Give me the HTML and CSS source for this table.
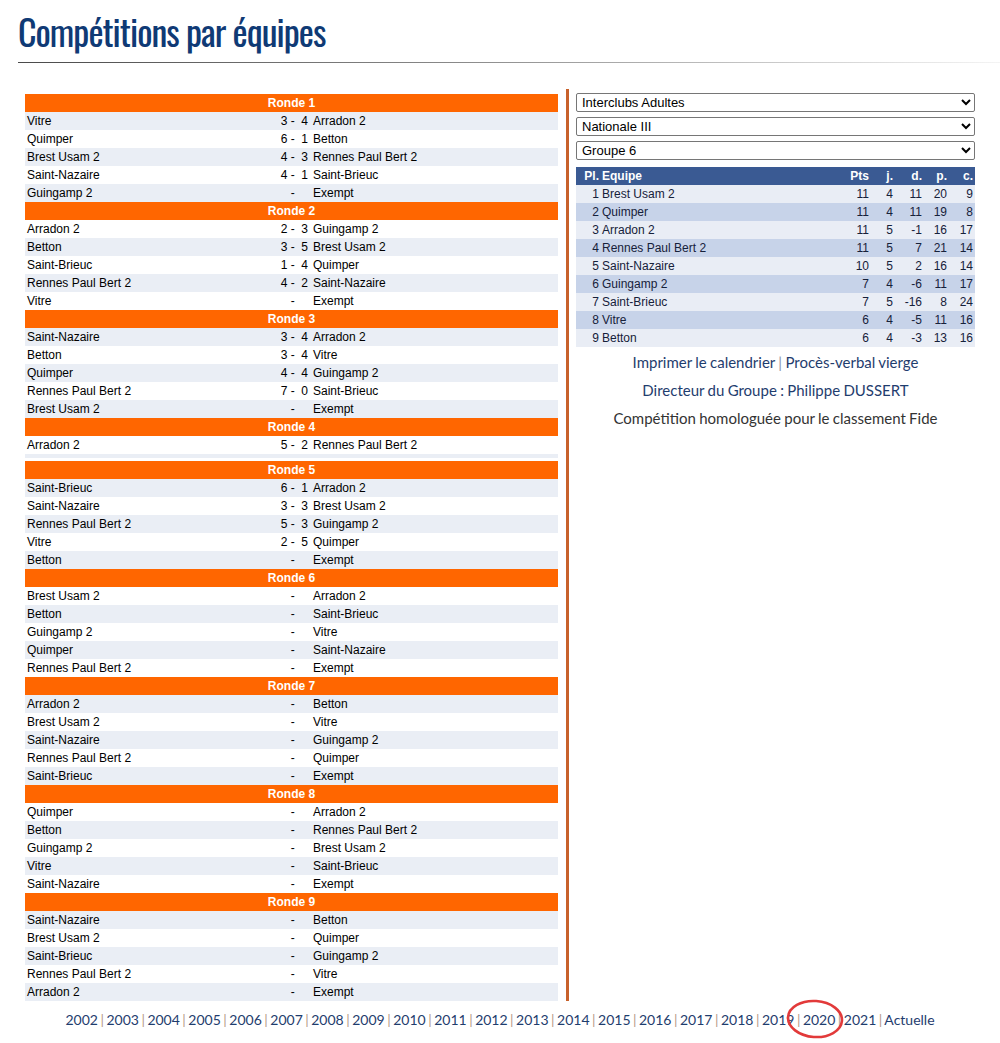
FILE: index.html
```html
<!DOCTYPE html>
<html lang="fr">
<head>
<meta charset="utf-8">
<title>Compétitions par équipes</title>
<link rel="stylesheet" href="styles.css">
</head>
<body>
<header class="head">
  <h1 class="title">Compétitions par équipes</h1>
  <div class="rule"></div>
</header>

<main class="main">
  <section class="rounds">
    <div class="ronde">
      <div class="rhead">Ronde 1</div>
      <div class="row l"><span class="t1">Vitre</span><span class="sc">3 -&nbsp;&nbsp;4</span><span class="t2">Arradon 2</span></div>
      <div class="row"><span class="t1">Quimper</span><span class="sc">6 -&nbsp;&nbsp;1</span><span class="t2">Betton</span></div>
      <div class="row l"><span class="t1">Brest Usam 2</span><span class="sc">4 -&nbsp;&nbsp;3</span><span class="t2">Rennes Paul Bert 2</span></div>
      <div class="row"><span class="t1">Saint-Nazaire</span><span class="sc">4 -&nbsp;&nbsp;1</span><span class="t2">Saint-Brieuc</span></div>
      <div class="row l"><span class="t1">Guingamp 2</span><span class="sc">-&nbsp;&nbsp;&nbsp;&nbsp;</span><span class="t2">Exempt</span></div>
    </div>
    <div class="ronde">
      <div class="rhead">Ronde 2</div>
      <div class="row"><span class="t1">Arradon 2</span><span class="sc">2 -&nbsp;&nbsp;3</span><span class="t2">Guingamp 2</span></div>
      <div class="row l"><span class="t1">Betton</span><span class="sc">3 -&nbsp;&nbsp;5</span><span class="t2">Brest Usam 2</span></div>
      <div class="row"><span class="t1">Saint-Brieuc</span><span class="sc">1 -&nbsp;&nbsp;4</span><span class="t2">Quimper</span></div>
      <div class="row l"><span class="t1">Rennes Paul Bert 2</span><span class="sc">4 -&nbsp;&nbsp;2</span><span class="t2">Saint-Nazaire</span></div>
      <div class="row"><span class="t1">Vitre</span><span class="sc">-&nbsp;&nbsp;&nbsp;&nbsp;</span><span class="t2">Exempt</span></div>
    </div>
    <div class="ronde">
      <div class="rhead">Ronde 3</div>
      <div class="row l"><span class="t1">Saint-Nazaire</span><span class="sc">3 -&nbsp;&nbsp;4</span><span class="t2">Arradon 2</span></div>
      <div class="row"><span class="t1">Betton</span><span class="sc">3 -&nbsp;&nbsp;4</span><span class="t2">Vitre</span></div>
      <div class="row l"><span class="t1">Quimper</span><span class="sc">4 -&nbsp;&nbsp;4</span><span class="t2">Guingamp 2</span></div>
      <div class="row"><span class="t1">Rennes Paul Bert 2</span><span class="sc">7 -&nbsp;&nbsp;0</span><span class="t2">Saint-Brieuc</span></div>
      <div class="row l"><span class="t1">Brest Usam 2</span><span class="sc">-&nbsp;&nbsp;&nbsp;&nbsp;</span><span class="t2">Exempt</span></div>
    </div>
    <div class="ronde clipped">
      <div class="rhead">Ronde 4</div>
      <div class="row"><span class="t1">Arradon 2</span><span class="sc">5 -&nbsp;&nbsp;2</span><span class="t2">Rennes Paul Bert 2</span></div>
      <div class="strip"></div>
    </div>
    <div class="ronde">
      <div class="rhead">Ronde 5</div>
      <div class="row l"><span class="t1">Saint-Brieuc</span><span class="sc">6 -&nbsp;&nbsp;1</span><span class="t2">Arradon 2</span></div>
      <div class="row"><span class="t1">Saint-Nazaire</span><span class="sc">3 -&nbsp;&nbsp;3</span><span class="t2">Brest Usam 2</span></div>
      <div class="row l"><span class="t1">Rennes Paul Bert 2</span><span class="sc">5 -&nbsp;&nbsp;3</span><span class="t2">Guingamp 2</span></div>
      <div class="row"><span class="t1">Vitre</span><span class="sc">2 -&nbsp;&nbsp;5</span><span class="t2">Quimper</span></div>
      <div class="row l"><span class="t1">Betton</span><span class="sc">-&nbsp;&nbsp;&nbsp;&nbsp;</span><span class="t2">Exempt</span></div>
    </div>
    <div class="ronde">
      <div class="rhead">Ronde 6</div>
      <div class="row"><span class="t1">Brest Usam 2</span><span class="sc">-&nbsp;&nbsp;&nbsp;&nbsp;</span><span class="t2">Arradon 2</span></div>
      <div class="row l"><span class="t1">Betton</span><span class="sc">-&nbsp;&nbsp;&nbsp;&nbsp;</span><span class="t2">Saint-Brieuc</span></div>
      <div class="row"><span class="t1">Guingamp 2</span><span class="sc">-&nbsp;&nbsp;&nbsp;&nbsp;</span><span class="t2">Vitre</span></div>
      <div class="row l"><span class="t1">Quimper</span><span class="sc">-&nbsp;&nbsp;&nbsp;&nbsp;</span><span class="t2">Saint-Nazaire</span></div>
      <div class="row"><span class="t1">Rennes Paul Bert 2</span><span class="sc">-&nbsp;&nbsp;&nbsp;&nbsp;</span><span class="t2">Exempt</span></div>
    </div>
    <div class="ronde">
      <div class="rhead">Ronde 7</div>
      <div class="row l"><span class="t1">Arradon 2</span><span class="sc">-&nbsp;&nbsp;&nbsp;&nbsp;</span><span class="t2">Betton</span></div>
      <div class="row"><span class="t1">Brest Usam 2</span><span class="sc">-&nbsp;&nbsp;&nbsp;&nbsp;</span><span class="t2">Vitre</span></div>
      <div class="row l"><span class="t1">Saint-Nazaire</span><span class="sc">-&nbsp;&nbsp;&nbsp;&nbsp;</span><span class="t2">Guingamp 2</span></div>
      <div class="row"><span class="t1">Rennes Paul Bert 2</span><span class="sc">-&nbsp;&nbsp;&nbsp;&nbsp;</span><span class="t2">Quimper</span></div>
      <div class="row l"><span class="t1">Saint-Brieuc</span><span class="sc">-&nbsp;&nbsp;&nbsp;&nbsp;</span><span class="t2">Exempt</span></div>
    </div>
    <div class="ronde">
      <div class="rhead">Ronde 8</div>
      <div class="row"><span class="t1">Quimper</span><span class="sc">-&nbsp;&nbsp;&nbsp;&nbsp;</span><span class="t2">Arradon 2</span></div>
      <div class="row l"><span class="t1">Betton</span><span class="sc">-&nbsp;&nbsp;&nbsp;&nbsp;</span><span class="t2">Rennes Paul Bert 2</span></div>
      <div class="row"><span class="t1">Guingamp 2</span><span class="sc">-&nbsp;&nbsp;&nbsp;&nbsp;</span><span class="t2">Brest Usam 2</span></div>
      <div class="row l"><span class="t1">Vitre</span><span class="sc">-&nbsp;&nbsp;&nbsp;&nbsp;</span><span class="t2">Saint-Brieuc</span></div>
      <div class="row"><span class="t1">Saint-Nazaire</span><span class="sc">-&nbsp;&nbsp;&nbsp;&nbsp;</span><span class="t2">Exempt</span></div>
    </div>
    <div class="ronde">
      <div class="rhead">Ronde 9</div>
      <div class="row l"><span class="t1">Saint-Nazaire</span><span class="sc">-&nbsp;&nbsp;&nbsp;&nbsp;</span><span class="t2">Betton</span></div>
      <div class="row"><span class="t1">Brest Usam 2</span><span class="sc">-&nbsp;&nbsp;&nbsp;&nbsp;</span><span class="t2">Quimper</span></div>
      <div class="row l"><span class="t1">Saint-Brieuc</span><span class="sc">-&nbsp;&nbsp;&nbsp;&nbsp;</span><span class="t2">Guingamp 2</span></div>
      <div class="row"><span class="t1">Rennes Paul Bert 2</span><span class="sc">-&nbsp;&nbsp;&nbsp;&nbsp;</span><span class="t2">Vitre</span></div>
      <div class="row l"><span class="t1">Arradon 2</span><span class="sc">-&nbsp;&nbsp;&nbsp;&nbsp;</span><span class="t2">Exempt</span></div>
    </div>
  </section>

  <aside class="side">
    <select class="sel"><option>Interclubs Adultes</option></select>
    <select class="sel"><option>Nationale III</option></select>
    <select class="sel"><option>Groupe 6</option></select>

    <table class="stand">
      <thead>
        <tr><th class="pl">Pl.</th><th class="eq">Equipe</th><th class="n pts">Pts</th><th class="n j">j.</th><th class="n d">d.</th><th class="n p">p.</th><th class="n c">c.</th></tr>
      </thead>
      <tbody>
        <tr><td class="pl">1</td><td class="eq">Brest Usam 2</td><td class="n">11</td><td class="n">4</td><td class="n">11</td><td class="n">20</td><td class="n">9</td></tr>
        <tr><td class="pl">2</td><td class="eq">Quimper</td><td class="n">11</td><td class="n">4</td><td class="n">11</td><td class="n">19</td><td class="n">8</td></tr>
        <tr><td class="pl">3</td><td class="eq">Arradon 2</td><td class="n">11</td><td class="n">5</td><td class="n">-1</td><td class="n">16</td><td class="n">17</td></tr>
        <tr><td class="pl">4</td><td class="eq">Rennes Paul Bert 2</td><td class="n">11</td><td class="n">5</td><td class="n">7</td><td class="n">21</td><td class="n">14</td></tr>
        <tr><td class="pl">5</td><td class="eq">Saint-Nazaire</td><td class="n">10</td><td class="n">5</td><td class="n">2</td><td class="n">16</td><td class="n">14</td></tr>
        <tr><td class="pl">6</td><td class="eq">Guingamp 2</td><td class="n">7</td><td class="n">4</td><td class="n">-6</td><td class="n">11</td><td class="n">17</td></tr>
        <tr><td class="pl">7</td><td class="eq">Saint-Brieuc</td><td class="n">7</td><td class="n">5</td><td class="n">-16</td><td class="n">8</td><td class="n">24</td></tr>
        <tr><td class="pl">8</td><td class="eq">Vitre</td><td class="n">6</td><td class="n">4</td><td class="n">-5</td><td class="n">11</td><td class="n">16</td></tr>
        <tr><td class="pl">9</td><td class="eq">Betton</td><td class="n">6</td><td class="n">4</td><td class="n">-3</td><td class="n">13</td><td class="n">16</td></tr>
      </tbody>
    </table>

    <div class="links">
      <div class="line"><a class="lnk" href="#">Imprimer le calendrier</a> <span class="bar">|</span> <a class="lnk" href="#">Procès-verbal vierge</a></div>
      <div class="line"><a class="lnk" href="#">Directeur du Groupe : Philippe DUSSERT</a></div>
      <div class="line plain">Compétition homologuée pour le classement Fide</div>
    </div>
  </aside>
</main>

<footer class="years">
  <a href="#">2002</a> <span class="bar">|</span> <a href="#">2003</a> <span class="bar">|</span> <a href="#">2004</a> <span class="bar">|</span> <a href="#">2005</a> <span class="bar">|</span> <a href="#">2006</a> <span class="bar">|</span> <a href="#">2007</a> <span class="bar">|</span> <a href="#">2008</a> <span class="bar">|</span> <a href="#">2009</a> <span class="bar">|</span> <a href="#">2010</a> <span class="bar">|</span> <a href="#">2011</a> <span class="bar">|</span> <a href="#">2012</a> <span class="bar">|</span> <a href="#">2013</a> <span class="bar">|</span> <a href="#">2014</a> <span class="bar">|</span> <a href="#">2015</a> <span class="bar">|</span> <a href="#">2016</a> <span class="bar">|</span> <a href="#">2017</a> <span class="bar">|</span> <a href="#">2018</a> <span class="bar">|</span> <a href="#">2019</a> <span class="bar">|</span> <a href="#">2020</a> <span class="bar">|</span> <a href="#">2021</a> <span class="bar">|</span> <a href="#">Actuelle</a>
</footer>

<svg class="circle" width="64" height="44" viewBox="0 0 64 44" aria-hidden="true">
  <ellipse cx="31" cy="21" rx="27" ry="18" fill="none" stroke="#e23a3a" stroke-width="2.6" transform="rotate(4 31 21)"/>
</svg>
</body>
</html>
```

FILE: styles.css
```css
html, body {
  margin: 0;
  padding: 0;
  background: #fff;
}

body {
  font-family: "Liberation Sans", Arial, sans-serif;
  font-size: 12px;
  color: #000;
  position: relative;
  width: 1000px;
  min-height: 1043px;
}

.head {
  padding: 6px 0 0 18px;
}

.title {
  margin: 0;
  font-family: "Oswald", "Liberation Sans Narrow", "DejaVu Sans Condensed", sans-serif;
  font-weight: normal;
  font-size: 36px;
  line-height: 50px;
  color: #0f3a75;
  letter-spacing: -1px;
}

.rule {
  height: 1px;
  margin-top: 6px;
  background: linear-gradient(to right, #4a4a4a 0%, #8a8a8a 45%, #cfcfcf 80%, #f4f4f4 100%);
}

.main {
  display: flex;
  margin: 26px 25px 0 25px;
}

.rounds {
  width: 533px;
  padding: 5px 8px 0 0;
  border-right: 3px solid #c8612b;
}

.rhead {
  background: #ff6600;
  color: #fff;
  font-weight: bold;
  text-align: center;
  height: 18px;
  line-height: 18px;
}

.row {
  display: grid;
  grid-template-columns: 250px 34px 1fr;
  height: 18px;
  line-height: 18px;
  background: #fff;
  white-space: nowrap;
}

.row.l {
  background: #eaeef5;
}

.t1 {
  padding-left: 2px;
}

.sc {
  text-align: right;
  padding-right: 1px;
}

.t2 {
  padding-left: 4px;
}

.clipped {
  margin-bottom: 3px;
}

.strip {
  height: 4px;
  background: #eaeef5;
}

.side {
  flex: 1;
  padding: 4px 0 0 7px;
  display: flex;
  flex-direction: column;
}

.sel {
  display: block;
  width: 100%;
  height: 19px;
  margin: 0 0 5px 0;
  padding: 0 1px;
  font-family: "Liberation Sans", Arial, sans-serif;
  font-size: 13px;
  color: #000;
  background: #fff;
  border: 1px solid #767676;
  border-radius: 2px;
}

.stand {
  width: 100%;
  border-collapse: collapse;
  margin-top: 2px;
  color: #16213a;
}

.stand th,
.stand td {
  height: 18px;
  padding: 0;
  line-height: 18px;
  white-space: nowrap;
}

.stand th {
  background: #3a5a93;
  color: #fff;
  font-weight: bold;
  text-align: left;
}

.stand tbody tr:nth-child(odd) {
  background: #e9edf5;
}

.stand tbody tr:nth-child(even) {
  background: #c7d3e9;
}

.stand .pl {
  width: 23px;
  text-align: right;
}

.stand .eq {
  padding-left: 3px;
  text-align: left;
}

.stand .n {
  text-align: right;
  padding-right: 2px;
}

.stand .pts { width: 38px; }
.stand .j { width: 22px; }
.stand .d { width: 27px; }
.stand .p { width: 23px; }
.stand .c { width: 24px; }

.links {
  margin-top: 1px;
  text-align: center;
  font-family: "Source Sans Pro", "Lato", sans-serif;
  font-size: 15px;
  word-spacing: -0.5px;
}

.line {
  line-height: 28px;
}

.lnk {
  color: #1f3d6e;
  text-decoration: none;
}

.bar {
  color: #8a93a6;
}

.plain {
  color: #333;
}

.years {
  text-align: center;
  font-family: "Source Sans Pro", "Lato", sans-serif;
  font-size: 14px;
  word-spacing: -1.1px;
  line-height: 22px;
  padding-top: 8px;
  color: #1f3d6e;
}

.years a {
  color: #1f3d6e;
  text-decoration: none;
}

.years .bar {
  color: #b49a86;
}

.circle {
  position: absolute;
  left: 784px;
  top: 998px;
}
```
